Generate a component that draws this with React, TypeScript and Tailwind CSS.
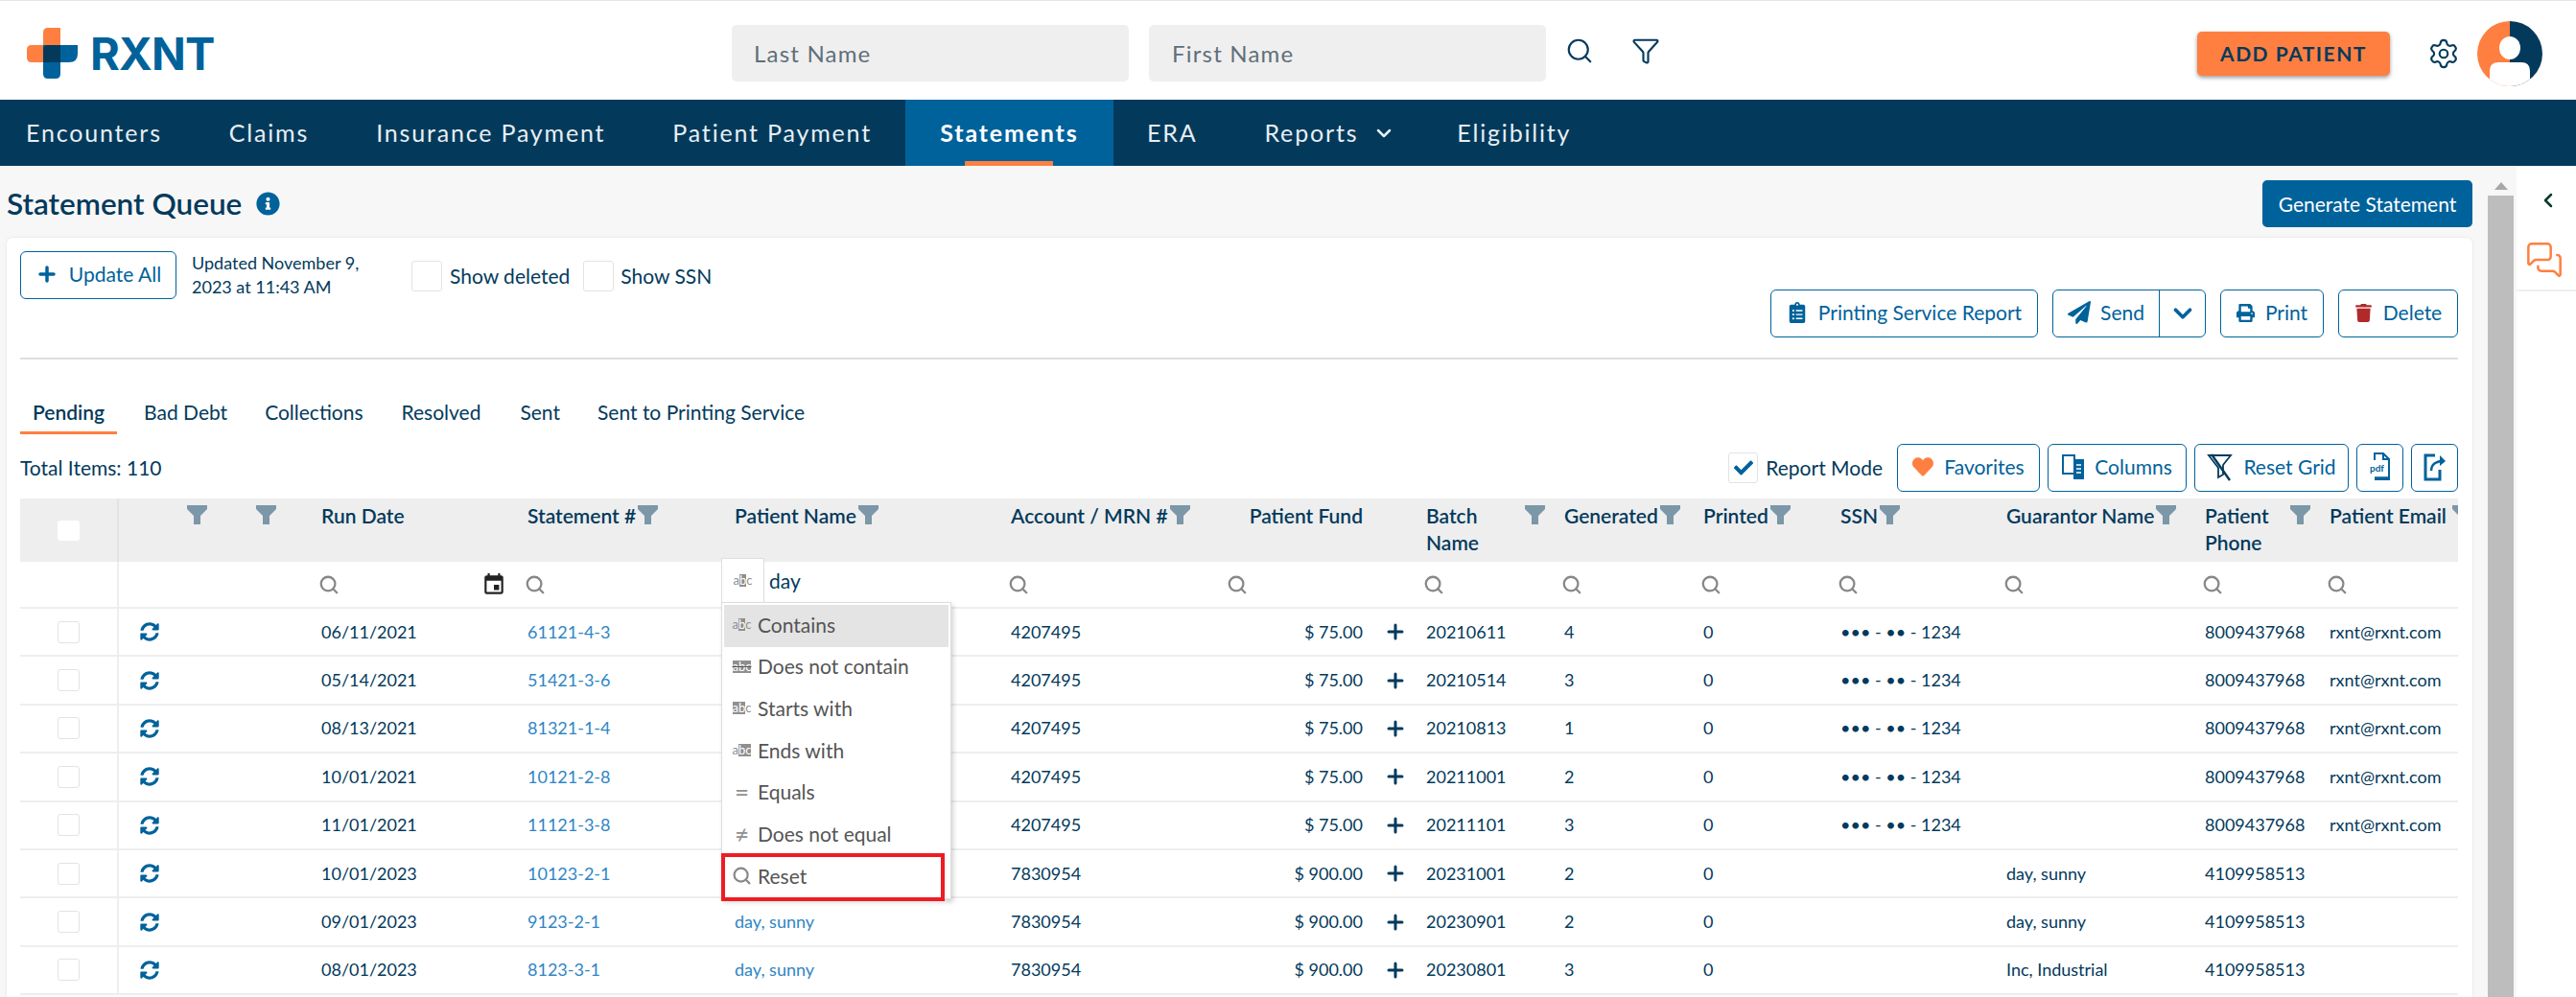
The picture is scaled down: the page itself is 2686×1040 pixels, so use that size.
import React from 'react';
import { ChevronDown, ChevronLeft, Funnel, MessagesSquare, Plus, Search, Settings } from 'lucide-react';
import {
  FaCheck,
  FaClipboardList,
  FaHeart,
  FaInfoCircle,
  FaPaperPlane,
  FaPrint,
  FaSyncAlt,
  FaTrash,
} from 'react-icons/fa';
import { MdEvent } from 'react-icons/md';

const navItems = ['Insurance Payment', 'Patient Payment'];

const colWidths = ['w-[102px]', 'w-[212px]', 'w-[215px]', 'w-[216px]', 'w-[288px]', 'w-[228px]', 'w-[205px]', 'w-[144px]', 'w-[145px]', 'w-[143px]', 'w-[173px]', 'w-[207px]', 'w-[130px]', 'w-[134px]'];

const SSN = '••• - •• - 1234';

const rows = [
  { date: '06/11/2021', no: '61121-4-3', name: '', acct: '4207495', fund: '$ 75.00', batch: '20210611', gen: '4', ssn: SSN, guarantor: '', phone: '8009437968', email: 'rxnt@rxnt.com' },
  { date: '05/14/2021', no: '51421-3-6', name: '', acct: '4207495', fund: '$ 75.00', batch: '20210514', gen: '3', ssn: SSN, guarantor: '', phone: '8009437968', email: 'rxnt@rxnt.com' },
  { date: '08/13/2021', no: '81321-1-4', name: '', acct: '4207495', fund: '$ 75.00', batch: '20210813', gen: '1', ssn: SSN, guarantor: '', phone: '8009437968', email: 'rxnt@rxnt.com' },
  { date: '10/01/2021', no: '10121-2-8', name: '', acct: '4207495', fund: '$ 75.00', batch: '20211001', gen: '2', ssn: SSN, guarantor: '', phone: '8009437968', email: 'rxnt@rxnt.com' },
  { date: '11/01/2021', no: '11121-3-8', name: '', acct: '4207495', fund: '$ 75.00', batch: '20211101', gen: '3', ssn: SSN, guarantor: '', phone: '8009437968', email: 'rxnt@rxnt.com' },
  { date: '10/01/2023', no: '10123-2-1', name: '', acct: '7830954', fund: '$ 900.00', batch: '20231001', gen: '2', ssn: '', guarantor: 'day, sunny', phone: '4109958513', email: '' },
  { date: '09/01/2023', no: '9123-2-1', name: 'day, sunny', acct: '7830954', fund: '$ 900.00', batch: '20230901', gen: '2', ssn: '', guarantor: 'day, sunny', phone: '4109958513', email: '' },
  { date: '08/01/2023', no: '8123-3-1', name: 'day, sunny', acct: '7830954', fund: '$ 900.00', batch: '20230801', gen: '3', ssn: '', guarantor: 'Inc, Industrial', phone: '4109958513', email: '' },
];

function Logo() {
  return (
    <div className="flex w-[193px] items-center">
      <svg width="53" height="53" viewBox="0 0 53 53" className="shrink-0">
        <path d="M22 0H35V36H5Q0 36 0 31V23Q0 18 5 18H17V5Q17 0 22 0Z" fill="#ff7f41" />
        <path d="M17 18H53V27Q53 36 44 36H35V48Q35 53 30 53H22Q17 53 17 48Z" fill="#00629b" />
        <path d="M22 18H35V36H17V23Q17 18 22 18Z" fill="#033a5c" />
      </svg>
      <span className="ml-[13px] text-[47px] leading-none font-bold tracking-[-0.8px] text-[#00629b] [font-family:Inter,sans-serif]">RXNT</span>
    </div>
  );
}

function Avatar() {
  return (
    <svg width="68" height="68" viewBox="0 0 68 68">
      <defs>
        <clipPath id="avatar-clip">
          <circle cx="34" cy="34" r="34" />
        </clipPath>
      </defs>
      <g clipPath="url(#avatar-clip)">
        <rect width="34" height="68" fill="#ff7f41" />
        <rect x="34" width="34" height="68" fill="#033a5c" />
        <ellipse cx="34" cy="28" rx="11" ry="12" fill="#fff" />
        <path d="M13 68V52Q13 43 22 43H46Q55 43 55 52V68Z" fill="#fff" />
      </g>
    </svg>
  );
}

function HeaderFilter() {
  return (
    <svg width="21" height="20" viewBox="0 0 21 20" className="shrink-0">
      <path d="M0 0H21V4L14 11V20H7V11L0 4Z" fill="#7b97a8" />
    </svg>
  );
}

function OutlineButton({ className, children }: { className: string; children: React.ReactNode }) {
  return (
    <button type="button" className={`flex h-[50px] shrink-0 items-center justify-center gap-[11px] rounded-[6px] border border-[#00629b] bg-white pb-[2px] text-[21px] text-[#00629b] ${className}`}>
      {children}
    </button>
  );
}

function Box({ className }: { className: string }) {
  return <span className={`block shrink-0 rounded-[3px] border border-[#e3e3e3] bg-white ${className}`} />;
}

function AbcIcon({ mark }: { mark: 'contains' | 'none' | 'starts' | 'ends' }) {
  const dark = 'bg-[#8f8f8f] text-white';
  const plain = 'text-[#8f8f8f]';
  const a = mark === 'none' || mark === 'starts' ? dark : plain;
  const c = mark === 'none' || mark === 'ends' ? dark : plain;
  return (
    <span className={`flex h-[13px] w-[20px] shrink-0 items-center justify-center text-[13px] leading-[13px] ${mark === 'none' ? 'line-through' : ''}`}>
      <span className={a}>a</span>
      <span className={dark}>b</span>
      <span className={c}>c</span>
    </span>
  );
}

function FilterMenuItem({ icon, label, className = '' }: { icon: React.ReactNode; label: string; className?: string }) {
  return (
    <div className={`flex h-[43.7px] items-center pb-[3px] text-[21px] text-[#555] ${className}`}>
      <span className="flex w-[35px] shrink-0 justify-center pl-[2px]">{icon}</span>
      <span>{label}</span>
    </div>
  );
}

function FilterMenu() {
  return (
    <div className="absolute top-[-4px] left-[-14px] z-10 w-[240px]">
      <div className="flex h-[46px] w-[45px] items-center justify-center border border-b-0 border-[#dedede] bg-white">
        <AbcIcon mark="contains" />
      </div>
      <span className="absolute top-[8px] left-[50px] text-[21px] text-[#033a5c]">day</span>
      <div className="h-[310px] border border-[#dedede] bg-white px-[2px] pt-[2px] shadow-[2px_3px_5px_rgba(0,0,0,0.18)]">
        <FilterMenuItem icon={<AbcIcon mark="contains" />} label="Contains" className="bg-[#e4e4e4]" />
        <FilterMenuItem icon={<AbcIcon mark="none" />} label="Does not contain" />
        <FilterMenuItem icon={<AbcIcon mark="starts" />} label="Starts with" />
        <FilterMenuItem icon={<AbcIcon mark="ends" />} label="Ends with" />
        <FilterMenuItem icon={<span className="text-[26px] leading-none text-[#8f8f8f]">=</span>} label="Equals" />
        <FilterMenuItem icon={<span className="text-[26px] leading-none text-[#8f8f8f]">≠</span>} label="Does not equal" />
        <div className="-mt-[3px] -ml-[3px] flex h-[50px] w-[233px] items-center border-4 border-[#ed1c24] pb-[3px] text-[21px] text-[#555]">
          <span className="flex w-[34px] shrink-0 justify-center">
            <Search size={21} strokeWidth={2.5} color="#888" />
          </span>
          <span>Reset</span>
        </div>
      </div>
    </div>
  );
}

function HeadCell({ lines, filterEnd }: { lines: string[]; filterEnd?: boolean }) {
  return (
    <th className="h-[66px] p-0 pt-[4px] align-top font-semibold">
      <div className={`flex items-start ${filterEnd ? 'justify-between pr-[20px]' : 'gap-[2px]'}`}>
        <span className="text-left text-[21px] leading-[28px] whitespace-pre-line">{lines.join('\n')}</span>
        <span className="mt-[3px]">
          <HeaderFilter />
        </span>
      </div>
    </th>
  );
}

function SearchCell() {
  return (
    <td className="relative h-[48px] border-b-2 border-[#eee] p-0">
      <Search size={22} strokeWidth={2.5} color="#888" className="-ml-[3px]" />
    </td>
  );
}

export default function App() {
  return (
    <div className="flex h-[1040px] w-[2686px] flex-col overflow-hidden bg-white text-[#033a5c] [font-family:Lato,sans-serif]">
      <header className="flex h-[104px] shrink-0 items-center border-t border-[#e5e5e5] pt-[6px]">
        <div className="ml-[28px]">
          <Logo />
        </div>
        <div className="ml-[542px] flex h-[59px] w-[414px] items-center rounded-[5px] bg-[#efefef] pl-[23px] text-[24px] tracking-[1.2px] text-[#5f6f7a]">Last Name</div>
        <div className="ml-[21px] flex h-[59px] w-[414px] items-center rounded-[5px] bg-[#efefef] pl-[24px] text-[24px] tracking-[1.2px] text-[#5f6f7a]">First Name</div>
        <Search size={30} strokeWidth={1.7} className="-mt-[6px] ml-[20px]" />
        <Funnel size={30} strokeWidth={1.7} className="-mt-[6px] ml-[39px]" />
        <button type="button" className="ml-[560px] flex h-[46px] w-[201px] items-center justify-center rounded-[5px] bg-[#ff7f41] text-[21px] font-bold tracking-[1.5px] text-[#033a5c] shadow-[0_2px_4px_rgba(0,0,0,0.4)]">
          ADD PATIENT
        </button>
        <Settings size={34} strokeWidth={1.5} className="ml-[39px]" />
        <div className="ml-[18px]">
          <Avatar />
        </div>
      </header>

      <nav className="flex h-[69px] shrink-0 items-stretch bg-[#033a5c] text-[25px] tracking-[1.82px] text-[#e8eef2]">
        <a className="flex items-center pr-[35px] pl-[27px]">Encounters</a>
        <a className="flex items-center px-[35px]">Claims</a>
        {navItems.map((item) => (
          <a key={item} className="flex items-center px-[35px]">
            {item}
          </a>
        ))}
        <a className="relative flex w-[217px] items-center justify-center bg-[#00629b] font-bold text-white">
          Statements
          <span className="absolute bottom-0 left-[62px] h-[5px] w-[92px] bg-[#ff7f41]" />
        </a>
        <a className="flex items-center px-[35px]">ERA</a>
        <a className="flex items-center gap-[15px] pr-[29px] pl-[35px]">
          Reports
          <ChevronDown size={24} strokeWidth={2.5} />
        </a>
        <a className="flex items-center px-[35px]">Eligibility</a>
      </nav>

      <div className="flex min-h-0 flex-1">
        <main className="flex w-[2594px] shrink-0 flex-col bg-[#f7f7f7]">
          <div className="flex h-[75px] shrink-0 items-start justify-between pt-[15px] pr-[16px] pl-[7px]">
            <div className="flex h-[49px] items-center gap-[15px]">
              <h1 className="text-[31.5px] font-semibold">Statement Queue</h1>
              <FaInfoCircle size={25} color="#00629b" />
            </div>
            <button type="button" className="flex h-[49px] w-[219px] items-center justify-center rounded-[5px] bg-[#00629b] text-[21px] text-white">
              Generate Statement
            </button>
          </div>

          <section className="mr-[16px] ml-[7px] flex-1 rounded-t-[6px] bg-white pt-[14px] pr-[15px] pl-[14px] shadow-[0_0_3px_rgba(0,0,0,0.1)]">
            <div className="flex h-[90px] items-start justify-between">
              <div className="flex items-start">
                <OutlineButton className="w-[163px]">
                  <Plus size={24} strokeWidth={3.5} color="#00629b" />
                  Update All
                </OutlineButton>
                <p className="ml-[16px] w-[200px] text-[18px] leading-[25px]">
                  Updated November 9,
                  <br />
                  2023 at 11:43 AM
                </p>
                <div className="mt-[10px] ml-[29px] flex items-center text-[21px]">
                  <Box className="h-[32px] w-[32px]" />
                  <span className="ml-[8px]">Show deleted</span>
                  <Box className="ml-[14px] h-[32px] w-[32px]" />
                  <span className="ml-[7px]">Show SSN</span>
                </div>
              </div>
              <div className="flex gap-[15px] self-end">
                <OutlineButton className="w-[279px]">
                  <FaClipboardList size={22} />
                  Printing Service Report
                </OutlineButton>
                <div className="flex h-[50px] w-[160px] rounded-[6px] border border-[#00629b] text-[21px] text-[#00629b]">
                  <span className="flex w-[111px] items-center justify-center gap-[10px] border-r border-[#00629b] pb-[2px]">
                    <FaPaperPlane size={24} />
                    Send
                  </span>
                  <span className="flex flex-1 items-center justify-center">
                    <ChevronDown size={30} strokeWidth={3} />
                  </span>
                </div>
                <OutlineButton className="w-[108px]">
                  <FaPrint size={19} />
                  Print
                </OutlineButton>
                <OutlineButton className="w-[125px]">
                  <FaTrash size={19} color="#b02a2a" />
                  Delete
                </OutlineButton>
              </div>
            </div>

            <div className="mt-[21px] h-[2px] bg-[#dedede]" />

            <div className="mt-[39px] flex h-[35px] items-start text-[21px]">
              <span className="border-b-[3px] border-[#ff7f41] px-[13px] pb-[4px] font-semibold">Pending</span>
              <span className="ml-[28px]">Bad Debt</span>
              <span className="ml-[39px]">Collections</span>
              <span className="ml-[40px]">Resolved</span>
              <span className="ml-[41px]">Sent</span>
              <span className="ml-[39px]">Sent to Printing Service</span>
            </div>

            <div className="mt-[14px] flex items-center justify-between">
              <span className="text-[21px]">Total Items: 110</span>
              <div className="flex items-center">
                <span className="flex h-[32px] w-[31px] items-center justify-center rounded-[3px] border border-[#e3e3e3]">
                  <FaCheck size={20} color="#00629b" />
                </span>
                <span className="ml-[8px] text-[21px]">Report Mode</span>
                <OutlineButton className="ml-[15px] w-[149px]">
                  <FaHeart size={22} color="#ff7f41" />
                  Favorites
                </OutlineButton>
                <OutlineButton className="ml-[8px] w-[145px]">
                  <svg width="23" height="26" viewBox="0 0 23 26" fill="none" stroke="#00629b" strokeWidth="2">
                    <rect x="1" y="1" width="12" height="19" />
                    <rect x="13" y="6" width="9" height="19" fill="#00629b" />
                    <path d="M15 11h5M15 15h5M15 19h5" stroke="#fff" strokeWidth="1.5" />
                  </svg>
                  Columns
                </OutlineButton>
                <OutlineButton className="ml-[8px] w-[161px]">
                  <svg width="27" height="30" viewBox="0 0 27 30" fill="none" stroke="#033a5c" strokeWidth="1.8">
                    <path d="M2 3H25L17 13V23L12 26V16Z" />
                    <path d="M5 2L24 29" strokeWidth="2.4" />
                  </svg>
                  Reset Grid
                </OutlineButton>
                <OutlineButton className="ml-[8px] w-[49px]">
                  <svg width="21" height="30" viewBox="0 0 21 30" fill="none" stroke="#00629b" strokeWidth="2">
                    <path d="M5 8V1H14L20 7V28H5" />
                    <path d="M14 1V7H20" />
                    <path d="M5 27H20" strokeWidth="3.5" />
                    <text x="0" y="20" fontSize="10" fontWeight="700" fill="#00629b" stroke="none">pdf</text>
                  </svg>
                </OutlineButton>
                <OutlineButton className="ml-[8px] w-[49px]">
                  <svg width="24" height="32" viewBox="0 0 24 32" fill="none" stroke="#00629b" strokeWidth="3">
                    <path d="M12 4H2V29H17V19" />
                    <path d="M8 20Q8 10 21 10" strokeWidth="2.5" />
                    <path d="M17 4L23 10L17 15Z" fill="#00629b" stroke="none" />
                  </svg>
                </OutlineButton>
              </div>
            </div>

            <table className="mt-[7px] w-[2542px] table-fixed border-collapse">
              <colgroup>
                {colWidths.map((w, i) => (
                  <col key={i} className={w} />
                ))}
              </colgroup>
              <thead>
                <tr className="bg-[#eeeeee]">
                  <th className="h-[66px] border-r-2 border-[#e3e3e3] p-0 align-middle">
                    <span className="flex justify-center">
                      <span className="block h-[21px] w-[23px] rounded-[3px] bg-white" />
                    </span>
                  </th>
                  <th className="p-0 pt-[7px] align-top">
                    <div className="flex gap-[51px] pl-[71px]">
                      <HeaderFilter />
                      <HeaderFilter />
                    </div>
                  </th>
                  <th className="p-0 pt-[4px] text-left align-top text-[21px] leading-[28px] font-semibold">Run Date</th>
                  <HeadCell lines={['Statement #']} />
                  <HeadCell lines={['Patient Name']} />
                  <HeadCell lines={['Account / MRN #']} />
                  <th className="p-0 pt-[4px] pr-[66px] text-right align-top text-[21px] leading-[28px] font-semibold">Patient Fund</th>
                  <HeadCell lines={['Batch', 'Name']} filterEnd />
                  <HeadCell lines={['Generated']} />
                  <HeadCell lines={['Printed']} />
                  <HeadCell lines={['SSN']} />
                  <HeadCell lines={['Guarantor Name']} />
                  <HeadCell lines={['Patient', 'Phone']} filterEnd />
                  <th className="overflow-hidden p-0 pt-[4px] align-top font-semibold">
                    <div className="flex w-[150px] items-start gap-[6px]">
                      <span className="text-[21px] leading-[28px] whitespace-nowrap">Patient Email</span>
                      <span className="mt-[3px]">
                        <HeaderFilter />
                      </span>
                    </div>
                  </th>
                </tr>
              </thead>
              <tbody>
                <tr>
                  <td className="h-[48px] border-r-2 border-b-2 border-[#eee] p-0" />
                  <td className="border-b-2 border-[#eee] p-0" />
                  <td className="border-b-2 border-[#eee] p-0">
                    <div className="flex items-center justify-between pr-[22px]">
                      <Search size={22} strokeWidth={2.5} color="#888" className="-ml-[3px]" />
                      <MdEvent size={26} color="#222" />
                    </div>
                  </td>
                  <SearchCell />
                  <td className="relative border-b-2 border-[#eee] p-0">
                    <FilterMenu />
                  </td>
                  <SearchCell />
                  <SearchCell />
                  <SearchCell />
                  <SearchCell />
                  <SearchCell />
                  <SearchCell />
                  <SearchCell />
                  <SearchCell />
                  <SearchCell />
                </tr>
                {rows.map((row) => (
                  <tr key={row.no} className="h-[50.4px] border-b-2 border-[#eee] text-[18px]">
                    <td className="border-r-2 border-[#eee] p-0">
                      <span className="flex justify-center">
                        <Box className="h-[23px] w-[23px]" />
                      </span>
                    </td>
                    <td className="p-0 pl-[22px]">
                      <FaSyncAlt size={20} color="#00629b" />
                    </td>
                    <td className="p-0">{row.date}</td>
                    <td className="p-0 text-[#2f86c6]">{row.no}</td>
                    <td className="p-0 text-[#2f86c6]">{row.name}</td>
                    <td className="p-0">{row.acct}</td>
                    <td className="p-0">
                      <div className="flex items-center justify-end gap-[22px] pr-[20px]">
                        <span>{row.fund}</span>
                        <Plus size={24} strokeWidth={3} />
                      </div>
                    </td>
                    <td className="p-0">{row.batch}</td>
                    <td className="p-0">{row.gen}</td>
                    <td className="p-0">0</td>
                    <td className="p-0">{row.ssn}</td>
                    <td className="p-0">{row.guarantor}</td>
                    <td className="p-0">{row.phone}</td>
                    <td className="p-0">{row.email}</td>
                  </tr>
                ))}
              </tbody>
            </table>
          </section>
        </main>

        <div className="flex w-[30px] shrink-0 flex-col bg-[#f7f7f7]">
          <div className="flex h-[31px] w-[27px] items-center justify-center pt-[10px]">
            <span className="block h-0 w-0 border-x-[7px] border-b-[8px] border-x-transparent border-b-[#a8a8a8]" />
          </div>
          <div className="w-[27px] flex-1 bg-[#bdbdbd]" />
        </div>

        <aside className="flex-1 bg-white">
          <div className="flex h-[131px] flex-col items-center border-b-2 border-[#eee] pt-[24px] pl-[4px]">
            <ChevronLeft size={24} strokeWidth={2.5} color="#033a2c" />
            <MessagesSquare size={40} strokeWidth={1.5} color="#ff7f41" className="mt-[30px] -ml-[8px]" />
          </div>
        </aside>
      </div>
    </div>
  );
}
